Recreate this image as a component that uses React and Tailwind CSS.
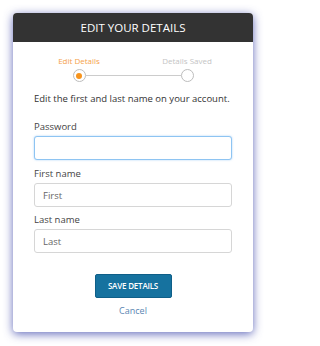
import React from "react";

const Field = ({ label, placeholder, focused, className = "" }) => (
  <div className={className}>
    <label className="block text-[9.5px] leading-[13px] text-[#444]">{label}</label>
    <input
      placeholder={placeholder}
      className={`mt-[3px] block w-full h-[24px] rounded-[3px] bg-white px-[8px] text-[9.5px] text-[#555] placeholder:text-[#666] outline-none border ${
        focused ? "border-[#8ec4f2] shadow-[0_0_2px_rgba(100,170,240,0.6)]" : "border-[#d6d6d6]"
      }`}
    />
  </div>
);

export default function App() {
  return (
    <div className="min-h-[346px] bg-white p-[13px] font-['Open_Sans',sans-serif]">
      <div className="w-[240px] h-[319px] bg-white rounded-[4px] overflow-hidden shadow-[0_2px_10px_rgba(60,70,170,0.8)] flex flex-col">
        <div className="h-[29px] bg-[#333333] flex items-center justify-center">
          <h1 className="text-white text-[11.5px]">EDIT YOUR DETAILS</h1>
        </div>

        <div className="px-[21px]">
          <div className="mt-[13px] mx-auto w-[168px] flex justify-between">
            <span className="w-[60px] text-center text-[8px] leading-[12px] text-[#f5a24a]">Edit Details</span>
            <span className="w-[60px] text-center text-[8px] leading-[12px] text-[#c4c4c4]">Details Saved</span>
          </div>
          <div className="mt-[2px] flex items-center justify-center">
            <div className="w-[13px] h-[13px] rounded-full border-[1.5px] border-[#bdbdbd] bg-white flex items-center justify-center">
              <div className="w-[6px] h-[6px] rounded-full bg-[#f7941d]" />
            </div>
            <div className="w-[95px] h-[1.5px] bg-[#cccccc]" />
            <div className="w-[13px] h-[13px] rounded-full border-[1.5px] border-[#bdbdbd] bg-white" />
          </div>

          <p className="mt-[10px] text-[9.5px] leading-[13px] text-[#333]">
            Edit the first and last name on your account.
          </p>

          <Field className="mt-[15px]" label="Password" focused />
          <Field className="mt-[7px]" label="First name" placeholder="First" />
          <Field className="mt-[6px]" label="Last name" placeholder="Last" />

          <div className="mt-[21px] flex flex-col items-center">
            <button className="w-[77px] h-[24px] rounded-[2px] bg-[#16729f] text-white text-[8px] font-semibold tracking-[-0.2px] border border-[#0f5f88]">
              SAVE DETAILS
            </button>
            <a href="#" className="mt-[6px] text-[9px] leading-[13px] text-[#5a86b3]">
              Cancel
            </a>
          </div>
        </div>
      </div>
    </div>
  );
}
